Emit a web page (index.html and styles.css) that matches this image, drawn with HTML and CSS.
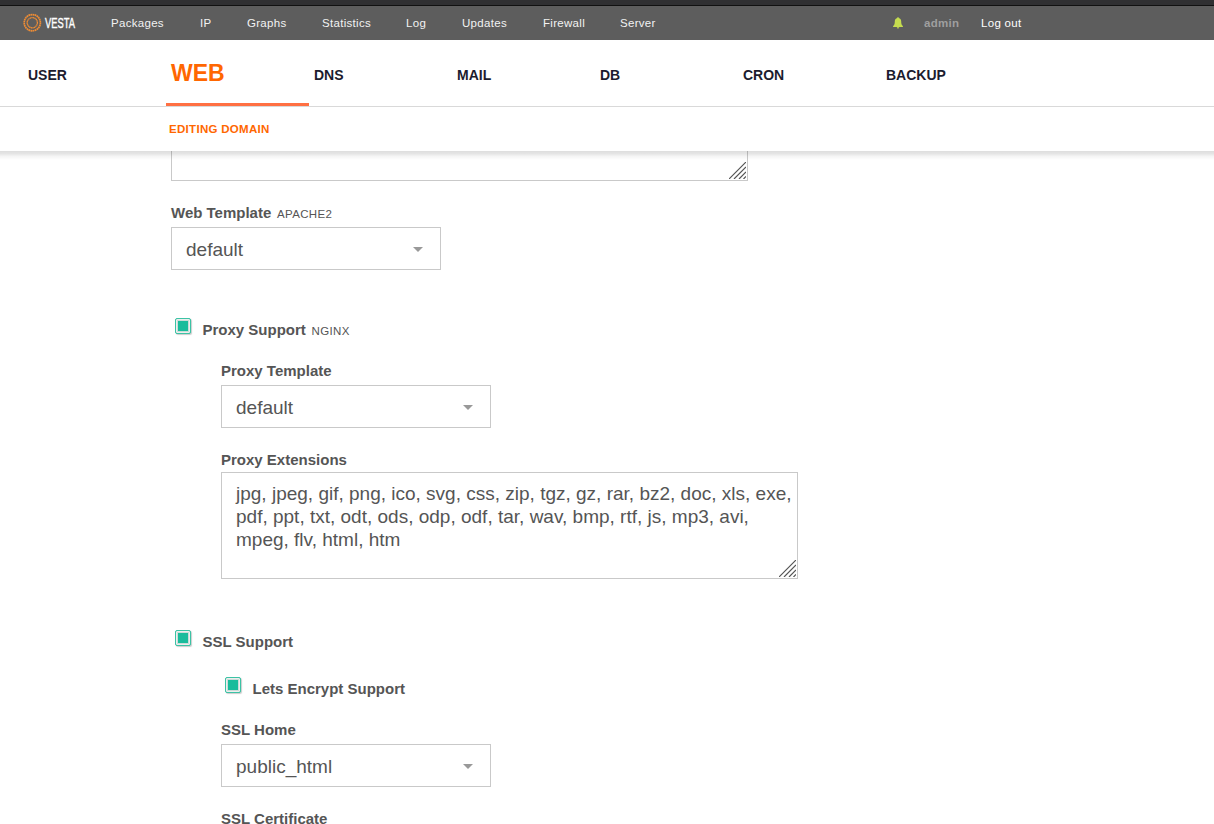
FILE: index.html
```html
<!DOCTYPE html>
<html lang="en">
<head>
<meta charset="utf-8">
<title>Vesta - Editing Domain</title>
<link rel="stylesheet" href="styles.css">
</head>
<body>
<header class="header">
  <div class="topbar">
    <svg class="logo" width="54" height="20" viewBox="0 0 54 20">
      <g fill="none" stroke="#ee8c34">
        <circle cx="9.3" cy="9.7" r="8.1" stroke-width="1.7" stroke-dasharray="1.7 .42"/>
        <circle cx="9.3" cy="9.7" r="5.1" stroke-width="1.3" stroke-dasharray="1.3 .3"/>
      </g>
      <text class="logo-text" x="22" y="15" textLength="30" lengthAdjust="spacingAndGlyphs">VESTA</text>
    </svg>
    <nav class="topnav">
      <a>Packages</a><a>IP</a><a>Graphs</a><a>Statistics</a><a>Log</a><a>Updates</a><a>Firewall</a><a>Server</a>
    </nav>
    <div class="account">
      <svg class="bell" width="10" height="12" viewBox="0 0 10 12"><path fill="#c5dc4f" d="M4.300.2h1.400v.9C7.500 1.500 8.200 2.900 8.200 4.500c0 2.300.4 3.500 1.700 4.500v1H.1V9c1.300-1 1.700-2.200 1.700-4.500 0-1.600.7-3 2.500-3.400zM3.800 10.200h2.400a1.200 1.200 0 0 1-2.400 0z"/></svg>
      <a class="user">admin</a>
      <a class="logout">Log out</a>
    </div>
  </div>
  <nav class="tabs">
    <a class="tab">USER</a><a class="tab active">WEB</a><a class="tab">DNS</a><a class="tab">MAIL</a><a class="tab">DB</a><a class="tab">CRON</a><a class="tab">BACKUP</a>
  </nav>
  <div class="subbar">EDITING DOMAIN</div>
</header>
<main class="form">
  <div class="textarea aliases"><svg class="grip" width="17" height="17" viewBox="0 0 17 17"><path d="M0 17 17 0M5 17 17 5M10 17l7-7M14.500 17l2.500-2.500"/></svg></div>
  <div class="label web-template">Web Template <small>APACHE2</small></div>
  <div class="select">default</div>
  <div class="check proxy"><i class="box"></i><span class="label">Proxy Support <small>NGINX</small></span></div>
  <section class="nested">
    <div class="label proxy-template">Proxy Template</div>
    <div class="select">default</div>
    <div class="label extensions">Proxy Extensions</div>
    <div class="textarea list">jpg, jpeg, gif, png, ico, svg, css, zip, tgz, gz, rar, bz2, doc, xls, exe,<br>pdf, ppt, txt, odt, ods, odp, odf, tar, wav, bmp, rtf, js, mp3, avi,<br>mpeg, flv, html, htm<svg class="grip" width="17" height="17" viewBox="0 0 17 17"><path d="M0 17 17 0M5 17 17 5M10 17l7-7M14.500 17l2.500-2.500"/></svg></div>
  </section>
  <div class="check ssl"><i class="box"></i><span class="label">SSL Support</span></div>
  <section class="nested">
    <div class="check encrypt"><i class="box"></i><span class="label">Lets Encrypt Support</span></div>
    <div class="label ssl-home">SSL Home</div>
    <div class="select">public_html</div>
    <div class="label certificate">SSL Certificate</div>
  </section>
</main>
</body>
</html>
```
FILE: styles.css
```css
* { box-sizing: border-box; }
body {
  margin: 0;
  height: 824px;
  overflow: hidden;
  background: #fff;
  color: #555;
  font-family: "Liberation Sans", Arial, sans-serif;
}
.header {
  position: relative;
  z-index: 1;
  height: 151px;
  background: #fff;
}
.header::after {
  content: "";
  position: absolute;
  top: 151px;
  left: 0;
  right: 0;
  height: 9px;
  background: linear-gradient(rgba(0, 0, 0, .13), rgba(0, 0, 0, .1) 30%, rgba(0, 0, 0, .04) 60%, rgba(0, 0, 0, 0));
}
.topbar {
  height: 40px;
  padding: 0 0 0 23px;
  display: flex;
  align-items: center;
  border-top: 5px solid #303032;
  background: linear-gradient(#111 1px, #5d5d5d 1px);
  font-size: 11.5px;
  letter-spacing: .3px;
  color: #f2f2f2;
}
.logo { overflow: visible; flex: none; }
.logo-text { font-size: 15.5px; letter-spacing: 0; fill: #fff; stroke: #fff; stroke-width: .4px; }
.topnav {
  margin-left: 34px;
  width: 781px;
  display: grid;
  grid-template-columns: 89px 47px 75px 84px 56px 81px 77px 1fr;
}
.account { display: grid; grid-template-columns: 31.5px 57px auto; align-items: center; margin-left: .5px; }
.user { font-weight: bold; color: #9f9f9f; }
.logout { color: #fff; }
.tabs {
  height: 67px;
  display: flex;
  padding-left: 23px;
  border-bottom: 1px solid #d9d9d9;
}
.tab {
  width: 143px;
  padding: 26px 0 0 5px;
  font-size: 14px;
  line-height: 18px;
  font-weight: bold;
  color: #1c1c2e;
}
.tab.active {
  padding-top: 19px;
  font-size: 23px;
  line-height: 28px;
  color: #ff6701;
  border-bottom: 3px solid #ff7043;
}
.subbar {
  padding: 15px 0 0 169px;
  font-size: 11.5px;
  letter-spacing: .3px;
  line-height: 14px;
  font-weight: bold;
  color: #ff6701;
}
.form { padding-left: 171px; }
.textarea {
  position: relative;
  width: 577px;
  border: 1px solid #c9c9c9;
}
.aliases { height: 39px; margin-top: -9px; }
.grip { position: absolute; right: 1px; bottom: 1px; fill: none; stroke: #555; stroke-width: 1.2; }
.label { font-size: 15px; line-height: 18px; font-weight: bold; }
.label small { font-size: 11.5px; letter-spacing: .35px; font-weight: normal; margin-left: 1.5px; }
.web-template { margin: 23px 0 5px; height: 18px; }
.select {
  width: 270px;
  height: 43px;
  padding: 2px 17px 0 14px;
  display: flex;
  align-items: center;
  justify-content: space-between;
  border: 1px solid #c9c9c9;
  font-size: 19px;
}
.select::after {
  content: "";
  border: 5px solid transparent;
  border-top-color: #999;
  border-bottom: 0;
}
.nested { padding-left: 50px; }
.check { display: flex; align-items: flex-start; height: 21px; padding-left: 4px; }
.box {
  width: 16px;
  height: 16px;
  margin-right: 11.5px;
  border: 1px solid #3cc3a5;
  border-radius: 2px;
  background: #1abc9c;
  box-shadow: inset 0 0 0 1px #eee, inset 0 0 0 2px #ccdcd8, 1px 1px 1px #ccc;
}
.check .label { margin-top: 3px; }
.proxy { margin-top: 48px; }
.proxy-template { margin: 23px 0 5px; }
.extensions { margin: 23px 0 3px; }
.list { height: 107px; padding: 9px 14px; font-size: 19px; line-height: 23px; white-space: nowrap; }
.ssl { margin-top: 51px; }
.encrypt { margin-top: 26px; }
.ssl-home { margin: 23px 0 5px; }
.certificate { margin-top: 23px; }
```
